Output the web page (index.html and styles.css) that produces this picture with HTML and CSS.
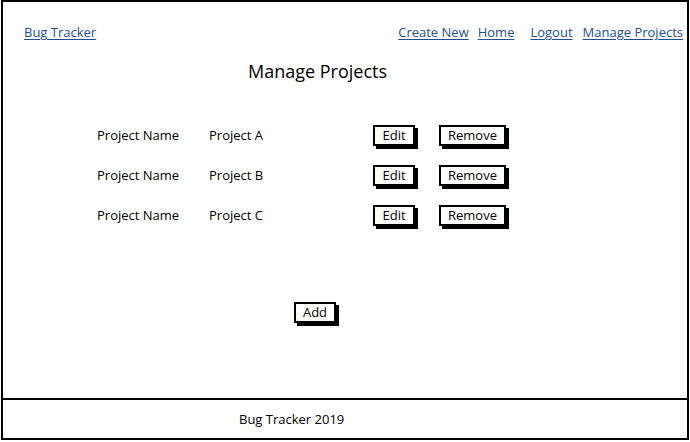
FILE: index.html
```html
<!DOCTYPE html>
<html>
<head>
<meta charset="utf-8">
<link rel="stylesheet" href="styles.css">
</head>
<body>
<div class="page">
  <div class="main">
    <div class="topbar">
      <a class="link" href="#">Bug Tracker</a>
      <nav class="nav">
        <a class="link" href="#">Create New</a>
        <a class="link home" href="#">Home</a>
        <a class="link logout" href="#">Logout</a>
        <a class="link" href="#">Manage Projects</a>
      </nav>
    </div>
    <h1 class="title">Manage Projects</h1>
    <div class="list">
      <div class="row">
        <span class="label">Project Name</span>
        <span class="value">Project A</span>
        <span class="cell"><button class="btn edit">Edit</button></span>
        <span class="cell"><button class="btn remove">Remove</button></span>
      </div>
      <div class="row">
        <span class="label">Project Name</span>
        <span class="value">Project B</span>
        <span class="cell"><button class="btn edit">Edit</button></span>
        <span class="cell"><button class="btn remove">Remove</button></span>
      </div>
      <div class="row">
        <span class="label">Project Name</span>
        <span class="value">Project C</span>
        <span class="cell"><button class="btn edit">Edit</button></span>
        <span class="cell"><button class="btn remove">Remove</button></span>
      </div>
    </div>
    <div class="addwrap"><button class="btn add">Add</button></div>
  </div>
  <div class="footer">Bug Tracker 2019</div>
</div>
</body>
</html>
```
FILE: styles.css
```css
* { box-sizing: border-box; }
html, body { margin: 0; padding: 0; background: #fff; }
body { width: 690px; height: 442px; font-family: "Open Sans", "Noto Sans", sans-serif; color: #000; font-size: 13px; }
.page { width: 690px; height: 442px; display: flex; flex-direction: column; padding: 0 1px 2px 1px; }
.main { height: 400px; border: 2px solid #000; display: flex; flex-direction: column; }
.footer { height: 40px; border: 2px solid #000; border-top: none; display: flex; align-items: center; padding-left: 236px; font-size: 13px; }
.topbar { display: flex; justify-content: space-between; align-items: center; height: 20px; margin-top: 20px; padding-left: 21px; padding-right: 4px; }
.nav { display: flex; }
.link { color: #1d4f91; text-decoration: underline; text-underline-offset: 2px; font-size: 13px; }
.home { margin-left: 9px; }
.logout { margin-left: 16px; }
.nav .link:last-child { margin-left: 10px; }
.title { margin: 17px 0 0 0; font-size: 18px; font-weight: 400; text-align: left; height: 24px; line-height: 24px; padding-left: 245px; }
.list { margin-top: 32px; display: flex; flex-direction: column; }
.row { display: grid; grid-template-columns: 112px 164px 66px auto; align-items: center; height: 40px; padding-left: 94px; }
.cell { display: flex; }
.btn { font-family: inherit; font-size: 13px; color: #000; background: #fff; border: 2px solid #000; box-shadow: 3px 3px 0 #000; height: 21px; padding: 0; line-height: 17px; border-radius: 0; }
.edit { width: 42px; }
.remove { width: 67px; }
.addwrap { margin-top: 67px; padding-left: 291px; display: flex; }
.add { width: 42px; }
```
